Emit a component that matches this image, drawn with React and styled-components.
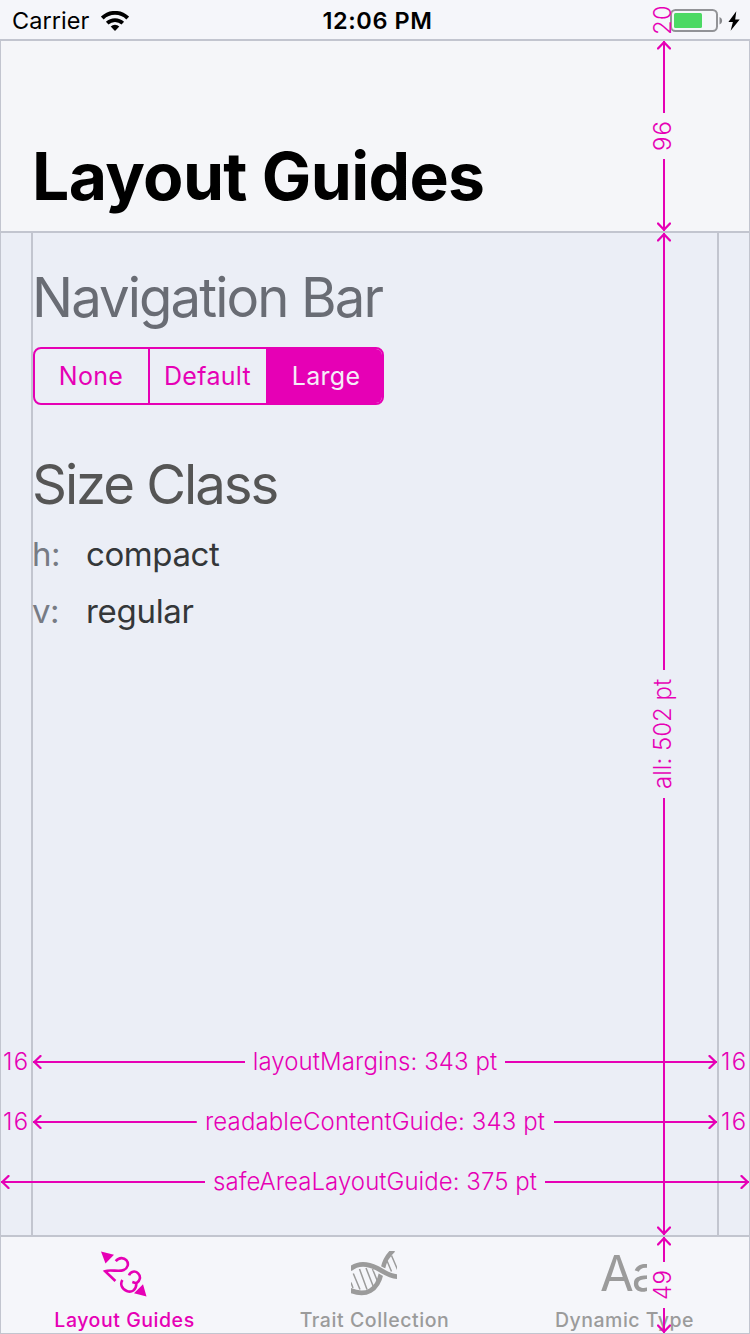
import React from 'react';
import styled, { createGlobalStyle, css } from 'styled-components';

const pink = '#e600b5';
const line = '#c2c5cf';
const gray = '#9b9b9b';
const bar = '#f5f6fa';

const GlobalStyle = createGlobalStyle`
  * { box-sizing: border-box; }
  body {
    margin: 0;
    background: #ebeef6;
    font-family: Inter, "Liberation Sans", sans-serif;
    -webkit-font-smoothing: antialiased;
  }
`;

const Screen = styled.main`
  position: relative;
  display: grid;
  grid-template-rows: 39px 194px 1002px 99px;
  width: 750px;
  height: 1334px;
  overflow: hidden;
  background: #ebeef6;
`;

const StatusBar = styled.header`
  display: grid;
  grid-template-columns: 1fr auto 1fr;
  align-items: center;
  padding: 2px 10px 0 12px;
  background: ${bar};
  font-size: 23.5px;
  line-height: 28px;
`;

const Carrier = styled.div`
  display: flex;
  align-items: center;
  gap: 12px;
  letter-spacing: 0.05px;
`;

const Clock = styled.time`
  padding-left: 3px;
  font-weight: 600;
  letter-spacing: 0.6px;
`;

const Power = styled.div`
  display: flex;
  align-items: center;
  justify-content: flex-end;
  gap: 5px;
`;

const NavBar = styled.nav`
  display: flex;
  align-items: flex-end;
  padding: 0 31px 15px;
  border: solid ${line};
  border-width: 2px 1px;
  background: #f5f6f9;
`;

const Title = styled.h1`
  margin: 0;
  font-size: 66px;
  font-weight: 700;
  line-height: 80px;
  letter-spacing: -0.65px;
`;

const Content = styled.section`
  display: flex;
  flex-direction: column;
  justify-content: space-between;
  border: solid ${line};
  border-width: 0 1px;
  background: linear-gradient(${line}, ${line}) 30px 0 / 2px 100% no-repeat,
    linear-gradient(${line}, ${line}) 716px 0 / 2px 100% no-repeat;
`;

const Settings = styled.div`
  padding: 30px 32px 0 31px;
`;

const Heading = styled.h2`
  margin: 0;
  color: ${(p) => p.$color};
  font-size: 54.5px;
  font-weight: 400;
  line-height: 68px;
  letter-spacing: ${(p) => p.$tracking}px;
`;

const Segments = styled.div`
  display: grid;
  grid-template-columns: 115px 118px 1fr;
  width: 351px;
  height: 58px;
  margin: 16px 0 45px 1px;
  overflow: hidden;
  border: 2px solid ${pink};
  border-radius: 8px;
`;

const Segment = styled.button`
  padding: 0 1px 1px 0;
  border: 0;
  border-right: 2px solid ${pink};
  background: ${(p) => (p.$selected ? pink : 'transparent')};
  color: ${(p) => (p.$selected ? '#f5ecf8' : pink)};
  font: 400 25px Inter, "Liberation Sans", sans-serif;
  letter-spacing: 0.3px;
  &:last-child {
    padding: 0 0 1px 2px;
    border-right: 0;
  }
`;

const Traits = styled.dl`
  display: grid;
  grid-template-columns: 54px 1fr;
  grid-auto-rows: 57px;
  align-items: center;
  margin: 7px 0 0;
  font-size: 33px;
  line-height: 40px;
`;

const TraitName = styled.dt`
  color: #777b84;
  font-weight: 400;
  letter-spacing: -0.6px;
`;

const TraitValue = styled.dd`
  margin: 0;
  color: #343739;
  letter-spacing: ${(p) => p.$tracking}px;
`;

const Dimensions = styled.div`
  padding-bottom: 23px;
`;

const DimensionRow = styled.div`
  display: grid;
  grid-template-columns: ${(p) => (p.$full ? '748px' : '32px 684px 32px')};
  height: 60px;
  align-items: center;
  color: ${pink};
`;

const measureText = css`
  color: ${pink};
  font-size: 24px;
  font-weight: 300;
  line-height: 28px;
  white-space: nowrap;
`;

const MarginValue = styled.span`
  ${measureText}
  padding-left: ${(p) => p.$inset}px;
  letter-spacing: 1.2px;
`;

const Measure = styled.div`
  display: flex;
  flex-direction: ${(p) => (p.$vertical ? 'column' : 'row')};
  align-items: center;
`;

const MeasureLabel = styled.span`
  ${measureText}
  flex: 0 0 ${(p) => p.$size}px;
  text-align: center;
  letter-spacing: ${(p) => p.$tracking || 0}px;
  ${(p) =>
    p.$vertical &&
    css`
      writing-mode: vertical-rl;
      transform: translateX(-1px) rotate(180deg);
    `}
`;

const Shaft = styled.div`
  display: flex;
  flex: 1;
  flex-direction: ${(p) => (p.$vertical ? 'column' : 'row')};
  justify-content: ${(p) => (p.$end ? 'flex-end' : 'flex-start')};
  align-items: center;
  background: linear-gradient(${pink}, ${pink}) center / ${(p) => (p.$vertical ? '2px 100%' : '100% 2px')} no-repeat;
`;

const Head = styled.svg`
  display: block;
  flex: none;
  transform: rotate(${(p) => p.$angle}deg);
`;

const VerticalOverlay = styled.div`
  position: absolute;
  top: 0;
  left: 650px;
  display: grid;
  grid-template-rows: 41px 190px 1002px 96px;
  grid-template-columns: 28px;
  width: 28px;
`;

const Stretch = styled.div`
  display: grid;
  margin: ${(p) => p.$offset}px 0 -${(p) => p.$offset}px;
`;

const TabBar = styled.footer`
  display: grid;
  grid-template-columns: 246px 254px 246px;
  border: solid ${line};
  border-width: 2px 1px 1px;
  background: ${bar};
`;

const Tab = styled.div`
  display: flex;
  flex-direction: column;
  align-items: center;
  padding-top: 14px;
  color: ${(p) => (p.$active ? pink : gray)};
  font-size: 19.5px;
  font-weight: 500;
  line-height: 24px;
  letter-spacing: ${(p) => p.$tracking}px;
  svg { margin-bottom: 11px; }
`;

const TabLabel = styled.span`
  padding-left: 1px;
`;

const TypeGlyph = styled.div`
  width: 46px;
  height: 46px;
  margin-bottom: 11px;
  overflow: hidden;
  font-size: 49px;
  font-weight: 400;
  line-height: 46px;
  text-indent: -1px;
  letter-spacing: -2px;
`;

function ArrowHead({ angle }) {
  return (
    <Head $angle={angle} width="14" height="14" viewBox="0 0 14 14" fill="none" stroke={pink} strokeWidth="2.3">
      <path d="M7.5 1 1.3 7 7.5 13" strokeLinecap="round" />
    </Head>
  );
}

function Ruler({ vertical, size, tracking, children }) {
  return (
    <Measure $vertical={vertical}>
      <Shaft $vertical={vertical}>
        <ArrowHead angle={vertical ? 90 : 0} />
      </Shaft>
      <MeasureLabel $vertical={vertical} $size={size} $tracking={tracking}>
        {children}
      </MeasureLabel>
      <Shaft $vertical={vertical} $end>
        <ArrowHead angle={vertical ? 270 : 180} />
      </Shaft>
    </Measure>
  );
}

const WifiIcon = () => (
  <svg width="28" height="20" viewBox="0 0 28 20" fill="none" stroke="#000">
    <path d="M1.3 7a18.2 18.2 0 0 1 25.4 0" strokeWidth="3.9" />
    <path d="M6.2 12.2a11.3 11.3 0 0 1 15.6 0" strokeWidth="3.7" />
    <path d="m14 20-4.3-4.4a6.2 6.2 0 0 1 8.6 0Z" fill="#000" stroke="none" />
  </svg>
);

const BatteryIcon = () => (
  <svg width="53" height="24" viewBox="0 0 53 24">
    <rect x="1" y="1" width="46" height="21" rx="4.5" fill="none" stroke="#929397" strokeWidth="2" />
    <rect x="4" y="4" width="28" height="15" rx="1.5" fill="#4cd964" />
    <path d="M49.5 8c3.5 1.5 3.5 6 0 7.5Z" fill="#87888c" />
  </svg>
);

const BoltIcon = () => (
  <svg width="12" height="20" viewBox="0 0 12 20">
    <path d="M8.3.2.4 11h4.5L2.6 19.8 11.7 8.4H7.2Z" />
  </svg>
);

const RulerIcon = () => (
  <svg width="46" height="46" viewBox="0 0 46 46">
    <path d="M0 .5 13 3.8 4.5 12.5ZM45.5 45.5 33 42.2 42 33.2Z" fill={pink} />
    <g fill="none" stroke={pink} strokeWidth="2.6">
      <path d="M14.7 10.1C18.2 6 23 6.5 25.3 9.2c3 3.5 1.5 8-2.6 9.8-5 2.2-13.4-1-18.6 1.2L14.4 30" />
      <path d="M28 24.4c1.5-4.4 6.3-4.9 9.1-2 3 3 2.3 7.5-1.8 9.9l-4-1.2M35.3 32.3c.4 7-5 9.5-9.5 7.7-5-1.9-7-7.2-4.4-11" />
    </g>
  </svg>
);

const DnaIcon = () => (
  <svg width="46" height="46" viewBox="0 0 46 46" fill="none" stroke={gray}>
    <path d="M0 31.5 2 37M2.3 22.5 9 38.5M8.5 18 16 38.5M15 17 22.5 36M21.5 18 27 31.5M36 9.8 40.5 20.5M40.5 4.5 46.5 18.5" strokeWidth="1.5" />
    <path d="M32 17C33.5 9.5 37 4 42.5-1" strokeWidth="4.5" />
    <path d="M-1 39.3C15 46 26.5 39.5 30.3 22" strokeWidth="4.8" />
    <path d="M24 16.2 26 17.2c3.5 1.9 6.5 3.9 9.8 5.5" stroke={bar} strokeWidth="7.4" />
    <path d="M-1 18.3C6.5 11.8 15.8 12 26 17.2c7 3.7 12.5 8.2 21 8.5" strokeWidth="4.8" />
  </svg>
);

export default function App() {
  return (
    <>
      <GlobalStyle />
      <Screen>
        <StatusBar>
          <Carrier>
            <span>Carrier</span>
            <WifiIcon />
          </Carrier>
          <Clock>12:06 PM</Clock>
          <Power>
            <BatteryIcon />
            <BoltIcon />
          </Power>
        </StatusBar>

        <NavBar>
          <Title>Layout Guides</Title>
        </NavBar>

        <Content>
          <Settings>
            <Heading $color="#696c74" $tracking={-1.9}>Navigation Bar</Heading>
            <Segments>
              <Segment>None</Segment>
              <Segment>Default</Segment>
              <Segment $selected>Large</Segment>
            </Segments>
            <Heading $color="#555555" $tracking={-2.05}>Size Class</Heading>
            <Traits>
              <TraitName>h:</TraitName>
              <TraitValue $tracking={-0.4}>compact</TraitValue>
              <TraitName>v:</TraitName>
              <TraitValue $tracking={-0.3}>regular</TraitValue>
            </Traits>
          </Settings>

          <Dimensions>
            <DimensionRow>
              <MarginValue $inset={2}>16</MarginValue>
              <Ruler size={260} tracking={0.1}>layoutMargins: 343 pt</Ruler>
              <MarginValue $inset={4}>16</MarginValue>
            </DimensionRow>
            <DimensionRow>
              <MarginValue $inset={2}>16</MarginValue>
              <Ruler size={357} tracking={0.1}>readableContentGuide: 343 pt</Ruler>
              <MarginValue $inset={4}>16</MarginValue>
            </DimensionRow>
            <DimensionRow $full>
              <Ruler size={340} tracking={0.05}>safeAreaLayoutGuide: 375 pt</Ruler>
            </DimensionRow>
          </Dimensions>
        </Content>

        <TabBar>
          <Tab $active $tracking={0.55}>
            <RulerIcon />
            <TabLabel>Layout Guides</TabLabel>
          </Tab>
          <Tab $tracking={0.57}>
            <DnaIcon />
            <TabLabel>Trait Collection</TabLabel>
          </Tab>
          <Tab $tracking={0.5}>
            <TypeGlyph>Aa</TypeGlyph>
            <TabLabel>Dynamic Type</TabLabel>
          </Tab>
        </TabBar>

        <VerticalOverlay>
          <MeasureLabel $vertical>20</MeasureLabel>
          <Ruler vertical size={46} tracking={1}>96</Ruler>
          <Stretch $offset={2}>
            <Ruler vertical size={128}>all: 502 pt</Ruler>
          </Stretch>
          <Stretch $offset={4}>
            <Ruler vertical size={46} tracking={0.5}>49</Ruler>
          </Stretch>
        </VerticalOverlay>
      </Screen>
    </>
  );
}
